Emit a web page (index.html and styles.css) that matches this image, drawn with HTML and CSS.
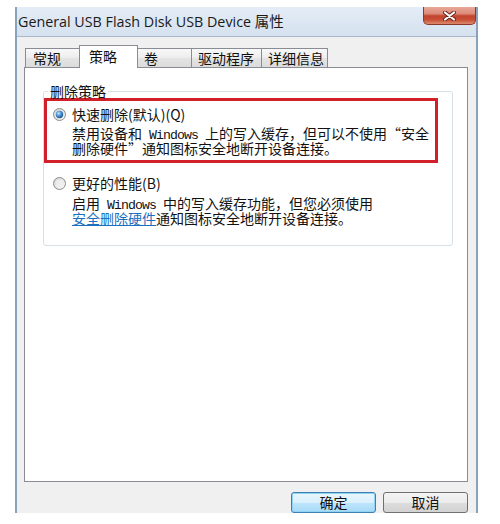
FILE: index.html
```html
<!DOCTYPE html>
<html lang="zh-CN">
<head>
<meta charset="utf-8">
<title>General USB Flash Disk USB Device 属性</title>
<link rel="stylesheet" href="styles.css">
</head>
<body>
<div class="window">
  <div class="titlebar">
    <span class="title">General USB Flash Disk USB Device <span class="cjk">属性</span></span>
    <div class="close">
      <svg width="13" height="10" viewBox="0 0 13 10" aria-hidden="true">
        <path d="M2 1.5 L11 8.5 M11 1.5 L2 8.5" stroke="#6b2115" stroke-width="4" stroke-linecap="round"/>
        <path d="M2 1.5 L11 8.5 M11 1.5 L2 8.5" stroke="#ffffff" stroke-width="2.2" stroke-linecap="round"/>
      </svg>
    </div>
  </div>
  <div class="client">
    <div class="tabs">
      <div class="tab t1">常规</div>
      <div class="tab t2 active">策略</div>
      <div class="tab t3">卷</div>
      <div class="tab t4">驱动程序</div>
      <div class="tab t5">详细信息</div>
    </div>
    <div class="panel">
      <fieldset class="group">
        <legend>删除策略</legend>
        <div class="option hl">
          <div class="radio-row">
            <svg class="radio" viewBox="0 0 13 13" aria-hidden="true">
              <defs>
                <linearGradient id="rg1" x1="0" y1="0" x2="1" y2="1">
                  <stop offset="0" stop-color="#d2d2d2"/>
                  <stop offset="1" stop-color="#fbfbfb"/>
                </linearGradient>
                <radialGradient id="dot" cx="0.38" cy="0.35" r="0.75">
                  <stop offset="0" stop-color="#c6ebff"/>
                  <stop offset="0.45" stop-color="#4a94d4"/>
                  <stop offset="1" stop-color="#17467a"/>
                </radialGradient>
              </defs>
              <circle cx="6.5" cy="6.5" r="6" fill="url(#rg1)" stroke="#8c8c8c"/>
              <circle cx="6.5" cy="6.5" r="3.7" fill="url(#dot)"/>
            </svg>
            <span>快速删除(默认)(Q)</span>
          </div>
          <div class="desc">
            <span class="line">禁用设备和<span class="mono"> Windows </span>上的写入缓存，但可以不使用“安全</span>
            <span class="line">删除硬件”通知图标安全地断开设备连接。</span>
          </div>
        </div>
        <div class="option plain">
          <div class="radio-row">
            <svg class="radio" viewBox="0 0 13 13" aria-hidden="true">
              <defs>
                <linearGradient id="rg2" x1="0" y1="0" x2="1" y2="1">
                  <stop offset="0" stop-color="#d2d2d2"/>
                  <stop offset="1" stop-color="#fbfbfb"/>
                </linearGradient>
              </defs>
              <circle cx="6.5" cy="6.5" r="6" fill="url(#rg2)" stroke="#8c8c8c"/>
              <circle cx="6.5" cy="6.5" r="4" fill="#f1f1f1" opacity="0.7"/>
            </svg>
            <span>更好的性能(B)</span>
          </div>
          <div class="desc">
            <span class="line">启用<span class="mono"> Windows </span>中的写入缓存功能，但您必须使用</span>
            <span class="line"><a class="link" href="#">安全删除硬件</a>通知图标安全地断开设备连接。</span>
          </div>
        </div>
      </fieldset>
    </div>
    <div class="buttons">
      <button class="btn default">确定</button>
      <button class="btn">取消</button>
    </div>
  </div>
</div>
</body>
</html>
```
FILE: styles.css
```css
html, body {
  margin: 0;
  padding: 0;
  background: #ffffff;
}

body {
  width: 500px;
  height: 524px;
  overflow: hidden;
  font-family: "Noto Sans CJK SC", "Noto Sans", sans-serif;
  color: #111;
}

.window {
  box-sizing: border-box;
  width: 463px;
  height: 506px;
  margin: 7px 0 0 15px;
  border-left: 2px solid #8aa3bd;
  border-right: 2px solid #8aa3bd;
  display: flex;
  flex-direction: column;
}

.titlebar {
  height: 29px;
  flex: none;
  display: flex;
  justify-content: space-between;
  align-items: flex-start;
  background: linear-gradient(#e4edf7, #d5e1ee);
}

.title {
  margin-top: 4px;
  padding-left: 1px;
  font-family: "Open Sans", "Noto Sans CJK SC", sans-serif;
  font-size: 14.3px;
  line-height: 20px;
  color: #1a1a1a;
  white-space: nowrap;
}

.title .cjk {
  font-family: "Noto Sans CJK SC", sans-serif;
  font-size: 14.5px;
}

.close {
  box-sizing: border-box;
  width: 53px;
  height: 18px;
  border: 1px solid #8a3a2c;
  border-top: none;
  border-radius: 0 0 5px 5px;
  background: linear-gradient(#e9a898 0%, #dc8a78 40%, #c3442e 52%, #c84f37 75%, #dd8a6d 100%);
  display: flex;
  align-items: center;
  justify-content: center;
}

.client {
  flex: 1;
  background: #f0f0f0;
  border-top: 1px solid #a9b8c8;
  padding: 8px 8px 0 7px;
}

.tabs {
  display: flex;
  align-items: flex-end;
  padding-left: 1px;
}

.tab {
  box-sizing: border-box;
  height: 19px;
  margin-left: -1px;
  padding-left: 7px;
  border: 1px solid #898c95;
  border-bottom: none;
  background: linear-gradient(#f8f8f8, #ededed 50%, #e4e4e4 51%, #dcdcdc);
  font-size: 14px;
  line-height: 18px;
  white-space: nowrap;
}

.tab:first-child {
  margin-left: 0;
}

.t1 { width: 55px; }
.t2 { width: 59px; }
.t3 { width: 55px; padding-left: 6px; }
.t4 { width: 71px; padding-left: 6px; }
.t5 { width: 67px; padding-left: 6px; }

.tab.active {
  height: 23px;
  margin-bottom: -1px;
  padding-left: 9px;
  padding-top: 1px;
  background: #ffffff;
  position: relative;
  z-index: 1;
}

.panel {
  box-sizing: border-box;
  width: 444px;
  height: 415px;
  border: 1px solid #898c95;
  background: #ffffff;
  padding: 16px 14px 0 18px;
}

.group {
  margin: 0;
  padding: 0 0 19px 0;
  border: 1px solid #d5dfe5;
  border-radius: 3px;
  min-width: 0;
}

.group legend {
  margin-left: 4px;
  padding: 0 2px;
  font-size: 14px;
  line-height: 14px;
}

.option.hl {
  box-sizing: border-box;
  width: 394px;
  border: 3px solid #d2202b;
  padding: 5px 0 4px 6px;
}

.option.plain {
  margin-top: 12px;
  padding-left: 9px;
}

.radio-row {
  display: flex;
  align-items: center;
  gap: 6px;
  height: 17px;
  font-size: 14px;
  line-height: 17px;
  white-space: nowrap;
}

.radio {
  width: 13px;
  height: 13px;
  flex: none;
}

.desc {
  margin: 3px 0 0 19px;
  font-size: 14px;
}

.desc .line {
  display: block;
  height: 15px;
  line-height: 15px;
  white-space: nowrap;
}

.option.plain .desc {
  margin-top: 4px;
}

.mono {
  font-family: "Liberation Mono", monospace;
  font-size: 13.2px;
  letter-spacing: -0.92px;
  line-height: 0;
}

.link {
  color: #1a6fc0;
  text-decoration: underline;
}

.buttons {
  display: flex;
  justify-content: flex-end;
  gap: 7px;
  margin-top: 10px;
}

.btn {
  box-sizing: border-box;
  width: 85px;
  height: 21px;
  padding: 0;
  border: 1px solid #707070;
  border-radius: 3px;
  background: linear-gradient(#f4f4f4 0%, #ebebeb 50%, #dddddd 51%, #d2d2d2 100%);
  font-family: "Noto Sans CJK SC", sans-serif;
  font-size: 14px;
  line-height: 19px;
  color: #111;
}

.btn.default {
  border-color: #3c7fb1;
  background: linear-gradient(#eaf6fd 0%, #d9f0fc 50%, #bee6fd 51%, #a7d9f5 100%);
  box-shadow: inset 0 0 0 1px #8fd4f5;
}
```
